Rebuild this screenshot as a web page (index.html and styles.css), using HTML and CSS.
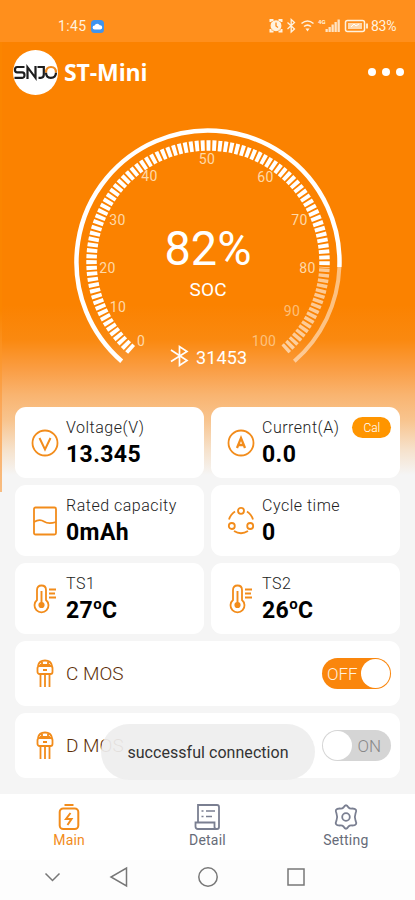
FILE: index.html
```html
<!DOCTYPE html>
<html lang="en">
<head>
    <meta charset="UTF-8">
    <meta name="viewport" content="width=device-width, initial-scale=1.0">
    <link rel="stylesheet" href="styles.css">
    <title>ST-Mini</title>
</head>
<body>
    <div class="status">
        <span class="clock">1:45</span>
        <svg class="cloud" width="13" height="13" viewBox="0 0 13 13">
            <rect width="13" height="13" rx="3.5" fill="#3f94ee"/>
            <path d="M3.6 9.5a2 2 0 0 1 0-4 2.9 2.9 0 0 1 5.2-.2 2.1 2.1 0 0 1 .6 4.2z" fill="#fff"/>
        </svg>
        <svg class="tray" width="102" height="16" viewBox="0 0 102 16">
            <g fill="none" stroke="#fff2df" stroke-width="1.3">
                <path d="M1.500 4V2h3M12.500 4V2h-3M1.500 11v2.500h3M12.500 11v2.500h-3" stroke-width="2"/>
                <circle cx="7" cy="7.700" r="4.800" fill="#fff2df"/>
                <path d="M7 4.500v3.500l2 1.500" stroke="#ff8d1a"/>
                <path d="M18.500 4.500l7 6.500-3.300 3V1.500l3.300 3-7 6.500"/>
                <path d="M32.500 5.500q6-5 12 0M35 8.500q3.500-2.800 7 0" stroke-width="1.600"/>
                <path d="M36.500 10.500h4l-2 3z" fill="#fff2df" stroke="none"/>
                <rect x="76.500" y="2.500" width="19" height="11" rx="2" stroke-width="1.500"/>
                <path d="M98 5.500v5" stroke-width="1.800"/>
            </g>
            <g fill="#fff2df">
                <text x="49" y="5.500" font-size="6" font-weight="700">4G</text>
                <path d="M56.500 11h2.300v3h-2.300zM59.500 9h2.300v5h-2.300zM62.500 6.500h2.300v7.500h-2.300zM65.500 4h2.300v10h-2.300zM68.500 1.500h2.300v12.500h-2.300z" opacity=".85"/>
                <rect x="79" y="5" width="14" height="6" opacity=".75"/>
            </g>
            <path d="M82 9l3-3 2 2 3-2" fill="none" stroke="#fff"/>
        </svg>
        <span class="percent">83%</span>
    </div>

    <div class="header">
        <div class="logo">
            <svg width="45" height="45" viewBox="0 0 45 45">
                <g fill="none" stroke="#1d1d1d" stroke-width="2.200">
                    <path d="M11.500 17H4.200q-2.200 0-2.200 2.700t2.200 2.700h5q2.300 0 2.300 2.700T9.200 27.800H1.500"/>
                    <path d="M14.500 29V17.200l8 10.600V16"/>
                    <path d="M24.500 17h6.300v7.500q0 3.300-3 3.300h-2.300"/>
                    <path d="M33 22.500q0 5.300 4.800 5.300 5.200 0 5.200-5.300"/>
                    <path d="M33 22.500q0-5.500 5-5.500t5 5.500" stroke="#ef8b20"/>
                </g>
            </svg>
        </div>
        <h1>ST-Mini</h1>
        <div class="more"><i></i><i></i><i></i></div>
    </div>

    <div class="gauge">
        <svg width="290" height="260" viewBox="63 115 290 260">
            <g fill="none" stroke="#fff">
                <path d="M121.700 361.200A131.500 131.500 0 1 1 339.400 267" stroke-width="4.500"/>
                <path d="M339.400 267A131.500 131.500 0 0 1 294.300 361.200" stroke-width="4" opacity=".5"/>
                <path d="M131.600 349.900A116.500 116.500 0 1 1 324.400 267.500" stroke-width="10.500" pathLength="821" stroke-dasharray="6.800 3.200"/>
                <path d="M324.400 268.500A116.500 116.500 0 0 1 284.400 349.900" stroke-width="10.500" pathLength="178" stroke-dasharray="6.600 3.400" opacity=".58"/>
            </g>
            <g class="scale">
                <text x="141" y="346">0</text>
                <text x="118" y="312">10</text>
                <text x="107.500" y="273">20</text>
                <text x="117.500" y="225">30</text>
                <text x="149.500" y="181">40</text>
                <text x="207" y="164">50</text>
                <text x="265.500" y="182">60</text>
                <text x="299.500" y="225">70</text>
                <text x="307.500" y="273">80</text>
                <text x="292" y="316" opacity=".7">90</text>
                <text x="264" y="346" opacity=".7">100</text>
            </g>
            <text class="soc" x="208" y="264.500" textLength="87" lengthAdjust="spacingAndGlyphs">82%</text>
            <text class="soc-name" x="208" y="296" textLength="37">SOC</text>
            <path d="M171 349.500l16 10.500-7.500 5v-19l7.500 5-16 10" fill="none" stroke="#fff" stroke-width="1.700" transform="translate(0 .5)"/>
            <text class="device" x="221.500" y="363.500" textLength="51">31453</text>
        </svg>
    </div>

    <div class="cards">
        <div class="card">
            <svg width="28" height="30" viewBox="0 0 28 30">
                <circle cx="14" cy="15" r="12.500"/>
                <path d="M8.500 10l5.500 11.500 5.500-11.500" stroke-width="2"/>
            </svg>
            <div class="info"><span>Voltage(V)</span><b>13.345</b></div>
        </div>
        <div class="card">
            <svg width="28" height="30" viewBox="0 0 28 30">
                <circle cx="14" cy="15" r="12.500"/>
                <path d="M10 20l4-10 4 10M11.500 17h5" stroke-width="2.300"/>
            </svg>
            <div class="info"><span>Current(A)</span><b>0.0</b></div>
            <button class="cal">Cal</button>
        </div>
        <div class="card">
            <svg width="28" height="30" viewBox="0 0 28 30">
                <rect x="3" y="1.500" width="22" height="27" rx="1.500"/>
                <path d="M3 16q5.500-3.500 10-.5t12 .5" stroke-width="1.600"/>
            </svg>
            <div class="info"><span>Rated capacity</span><b>0mAh</b></div>
        </div>
        <div class="card">
            <svg width="28" height="30" viewBox="0 0 28 30">
                <circle cx="14" cy="4.800" r="3"/>
                <circle cx="4.800" cy="20" r="3"/>
                <circle cx="23.200" cy="20" r="3"/>
                <path d="M2 13.500q1.500-5 6-8M26 13.500q-1.500-5-6-8M7 25q7 4.500 14 0"/>
            </svg>
            <div class="info"><span>Cycle time</span><b>0</b></div>
        </div>
        <div class="card">
            <svg width="28" height="30" viewBox="0 0 28 30">
                <path d="M6 16V6q0-4.500 4.500-4.500T15 6v10a7 7 0 1 1-9 0z"/>
                <path d="M10.500 7v14M18 5.500h7M18 9.500h6M18 13.500h7" stroke-width="1.900"/>
                <circle cx="10.500" cy="21" r="2.200" fill="#f28c1b"/>
            </svg>
            <div class="info"><span>TS1</span><b>27<i>o</i>C</b></div>
        </div>
        <div class="card">
            <svg width="28" height="30" viewBox="0 0 28 30">
                <path d="M6 16V6q0-4.500 4.500-4.500T15 6v10a7 7 0 1 1-9 0z"/>
                <path d="M10.500 7v14M18 5.500h7M18 9.500h6M18 13.500h7" stroke-width="1.900"/>
                <circle cx="10.500" cy="21" r="2.200" fill="#f28c1b"/>
            </svg>
            <div class="info"><span>TS2</span><b>26<i>o</i>C</b></div>
        </div>
        <div class="card mos">
            <svg width="28" height="30" viewBox="0 0 28 30">
                <path d="M7 7q1-5.500 7-5.500T21 7M11 3v4M17 3v4M9 6h10"/>
                <rect x="6.500" y="7" width="15" height="8" rx="2"/>
                <path d="M9.500 15v13M14 15v13M18.500 15v13M12 11h4"/>
            </svg>
            <span>C MOS</span>
            <div class="switch"><em>OFF</em><u></u></div>
        </div>
        <div class="card mos">
            <svg width="28" height="30" viewBox="0 0 28 30">
                <path d="M7 7q1-5.500 7-5.500T21 7M11 3v4M17 3v4M9 6h10"/>
                <rect x="6.500" y="7" width="15" height="8" rx="2"/>
                <path d="M9.500 15v13M14 15v13M18.500 15v13M12 11h4"/>
            </svg>
            <span>D MOS</span>
            <div class="switch gray"><u></u><em>ON</em></div>
        </div>
    </div>

    <div class="toast">successful connection</div>

    <div class="tabs">
        <div class="tab active">
            <svg width="28" height="28" viewBox="0 0 28 28">
                <path d="M9.500 2h9" />
                <rect x="4.700" y="5.500" width="18.600" height="20.500" rx="3.500"/>
                <path d="M15.500 10l-4.500 6h5.500l-4 6"/>
            </svg>
            Main
        </div>
        <div class="tab">
            <svg width="28" height="28" viewBox="0 0 28 28">
                <path d="M5 19V2h19q2 0 2 2v20q0 2-2 2H5q-2.500 0-2.500-2.500V19.500h19V24q0 2 2 2"/>
                <path d="M8.500 8h2M13 8h9M8.500 13.500h2M13 13.500h6" stroke-width="1.500"/>
            </svg>
            Detail
        </div>
        <div class="tab">
            <svg width="28" height="28" viewBox="0 0 28 28">
                <path d="M11.500 4.500Q14 0 16.500 4.500q1.500 1.500 3.700 1Q26 5.500 23.500 10.500q-1.300 3.500 0 7Q26 22.500 20.200 22.500q-2.200-.5-3.700 1Q14 28 11.500 23.500q-1.500-1.500-3.700-1Q2 22.500 4.500 17.500q1.300-3.500 0-7Q2 5.500 7.800 5.500q2.200.5 3.700-1z"/>
                <circle cx="14" cy="14" r="3.800"/>
            </svg>
            Setting
        </div>
    </div>

    <div class="keys">
        <svg width="415" height="40" viewBox="0 860 415 40">
            <path d="M45.500 873.500l7 7 7-7M126.500 868v18l-15.500-9z"/>
            <circle cx="208" cy="877" r="9.200"/>
            <rect x="288" y="869" width="16" height="16"/>
        </svg>
    </div>
</body>
</html>
```
FILE: styles.css
```css
* {
    box-sizing: border-box;
}

body {
    margin: 0;
    width: 415px;
    height: 900px;
    overflow: hidden;
    position: relative;
    font-family: Roboto, "Liberation Sans", sans-serif;
    background:
        linear-gradient(#fb8500 310px, #fba95c 410px, #f8bd82 492px) 0 0 / 2px 492px no-repeat,
        linear-gradient(#fb8200 0, #fb8200 305px, #fa8910 340px, #fa9e45 370px, #f9b470 395px, #f8c48e 420px, #f6e2cc 450px, #f5f5f5 475px);
}

.status {
    height: 42px;
    padding: 10px 16px 0 58px;
    display: flex;
    align-items: center;
    background: #ff8f1c;
    color: #fff2df;
    font-size: 14px;
}

.clock {
    width: 29px;
    letter-spacing: 0.4px;
}

.cloud {
    margin-left: 4px;
}

.tray {
    margin-left: auto;
}

.percent {
    width: 28px;
    font-size: 14px;
    letter-spacing: -0.3px;
}

.header {
    height: 60px;
    padding: 0 11px 0 13px;
    display: flex;
    align-items: center;
    color: #fff;
}

.logo {
    width: 45px;
    height: 45px;
    border-radius: 50%;
    background: #fff;
}

h1 {
    margin: 0 0 0 6px;
    font: 700 23px "Open Sans", sans-serif;
    letter-spacing: -0.1px;
}

.more {
    display: flex;
    gap: 6px;
    margin-left: auto;
}

.more i {
    width: 8px;
    height: 8px;
    border-radius: 50%;
    background: #fff;
}

.gauge {
    height: 305px;
    padding: 13px 0 0 63px;
}

.gauge text {
    fill: #fff;
    text-anchor: middle;
}

.gauge .scale text {
    fill: #ffd9a8;
    font-size: 14px;
    letter-spacing: 0.3px;
}

.gauge .soc {
    font-size: 49px;
}

.gauge .soc-name {
    font-size: 19px;
}

.gauge .device {
    font-size: 18px;
}

.cards {
    height: 387px;
    padding: 0 15px;
    display: grid;
    grid-template-columns: 1fr 1fr;
    grid-template-rows: 71px 71px 71px 65px 65px;
    gap: 7px;
}

.card {
    display: flex;
    align-items: center;
    padding-left: 16px;
    border-radius: 11px;
    background: #fff;
}

.card svg {
    fill: none;
    stroke: #f28c1b;
    stroke-width: 1.8;
}

.info {
    margin-left: 7px;
    display: flex;
    flex-direction: column;
    color: #222;
}

.info span {
    padding-top: 1px;
    font-size: 16px;
    font-weight: 300;
    line-height: 23px;
    letter-spacing: 0.5px;
}

.info b {
    font-size: 23px;
    line-height: 31px;
    letter-spacing: 0.4px;
    color: #000;
}

.info b i {
    font-style: normal;
    font-size: 15px;
    line-height: 0;
    vertical-align: 9px;
}

.cal {
    align-self: flex-start;
    width: 39px;
    height: 21px;
    margin: 10px 0 0 13px;
    padding: 0;
    border: 0;
    border-radius: 11px;
    background: #ff9500;
    color: #fff;
    font: 300 12px Roboto, sans-serif;
}

.mos {
    grid-column: 1 / 3;
    padding-right: 9px;
}

.mos span {
    margin-left: 7px;
    font-size: 19px;
    font-weight: 300;
    color: #5e2f08;
}

.switch {
    width: 69px;
    height: 31px;
    margin-left: auto;
    display: flex;
    align-items: center;
    justify-content: space-between;
    padding: 1px 1px 1px 5px;
    border-radius: 16px;
    background: #fa860c;
    color: #fff1df;
}

.switch em {
    font-style: normal;
    font-size: 17px;
    font-weight: 300;
}

.switch u {
    width: 29px;
    height: 29px;
    border-radius: 50%;
    background: #fff;
}

.gray {
    padding: 1px 10px 1px 1px;
    background: #d5d5d5;
    color: #888;
}

.toast {
    position: absolute;
    left: 101px;
    top: 724px;
    width: 214px;
    height: 56px;
    border-radius: 28px;
    background: rgba(238, 238, 238, 0.93);
    text-align: center;
    line-height: 57px;
    font-size: 16px;
    letter-spacing: 0.05px;
    color: #333;
}

.tabs {
    height: 66px;
    padding-top: 9px;
    display: grid;
    grid-template-columns: 1fr 1fr 1fr;
    background: #fff;
}

.tab {
    display: flex;
    flex-direction: column;
    align-items: center;
    font-size: 14px;
    line-height: 18px;
    letter-spacing: 0.2px;
    color: #666b78;
}

.tab svg {
    fill: none;
    stroke: #7a7f91;
    stroke-width: 1.8;
}

.active {
    color: #f28c1b;
}

.active svg {
    stroke: #f28c1b;
    stroke-width: 2;
}

.keys {
    height: 40px;
    background: #fdfdfd;
}

.keys svg {
    display: block;
    fill: none;
    stroke: #777;
    stroke-width: 1.5;
}
```
